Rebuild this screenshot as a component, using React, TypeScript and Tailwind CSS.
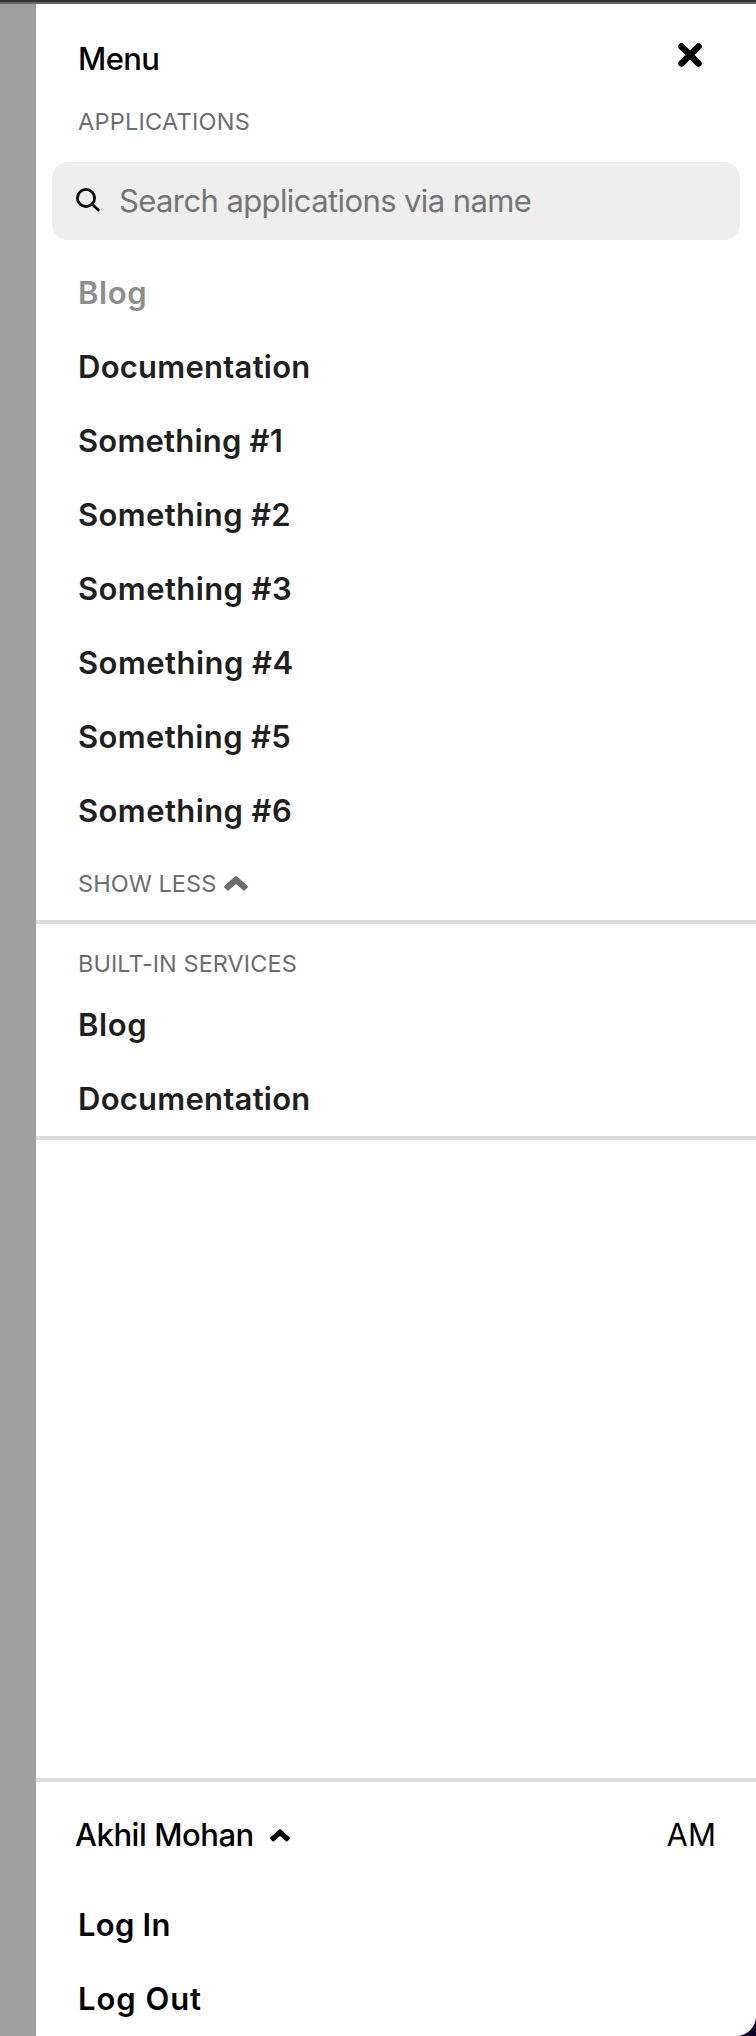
type Item = { label: string; tracking: string; muted?: boolean };

const applications: Item[] = [
  { label: "Blog", tracking: "tracking-[0.6px]", muted: true },
  { label: "Documentation", tracking: "tracking-[0.25px]" },
  { label: "Something #1", tracking: "tracking-[0.2px]" },
  { label: "Something #2", tracking: "tracking-[0.35px]" },
  { label: "Something #3", tracking: "tracking-[0.4px]" },
  { label: "Something #4", tracking: "tracking-[0.45px]" },
  { label: "Something #5", tracking: "tracking-[0.35px]" },
  { label: "Something #6", tracking: "tracking-[0.4px]" },
];

const services: Item[] = [
  { label: "Blog", tracking: "tracking-[0.6px]" },
  { label: "Documentation", tracking: "tracking-[0.25px]" },
];

const account: Item[] = [
  { label: "Log In", tracking: "tracking-[0.25px]" },
  { label: "Log Out", tracking: "tracking-[0.95px]" },
];

function MenuItem({ item, color }: { item: Item; color: string }) {
  return (
    <li className={`flex h-[74px] items-center pl-[42px] ${item.muted ? "text-[#8e8e8e]" : color}`}>
      <a className={`text-[31px] font-semibold whitespace-nowrap ${item.tracking}`}>{item.label}</a>
    </li>
  );
}

function SearchIcon() {
  return (
    <svg className="overflow-visible" width="24" height="24" viewBox="0 0 24 24" fill="none" stroke="#000" strokeWidth="2.8" strokeLinecap="round">
      <circle cx="10" cy="9" r="8.6" />
      <path d="M16.2 15.2 L22.3 21" />
    </svg>
  );
}

function CloseIcon() {
  return (
    <svg width="24" height="24" viewBox="0 0 24 24" fill="none" stroke="currentColor" strokeWidth="6.6" strokeLinecap="round">
      <path d="M3.5 3.5 L20.5 20.5 M20.5 3.5 L3.5 20.5" />
    </svg>
  );
}

function ChevronUp({ width, height }: { width: number; height: number }) {
  return (
    <svg width={width} height={height} viewBox="0 0 24 16" preserveAspectRatio="none" fill="currentColor">
      <path d="M10.8 0.6 Q12 -0.4 13.2 0.6 L23.6 10.6 Q24.4 11.4 23.6 12.3 L21 15.1 Q20.1 15.9 19.2 15.1 L12 8.5 L4.8 15.1 Q3.9 15.9 3 15.1 L0.4 12.3 Q-0.4 11.4 0.4 10.6 Z" />
    </svg>
  );
}

export default function App() {
  return (
    <div className="relative flex h-[2036px] w-[756px] flex-col overflow-hidden bg-[#9f9f9f] font-['Inter',sans-serif]">
      <div className="h-[4px] shrink-0 border-b-2 border-[#666666] bg-[#333333]" />
      <div className="flex grow bg-[#9f9f9f] pl-[36px]">
        <aside className="flex grow flex-col bg-white">
          <header className="flex h-[92px] items-start justify-between pt-[18px] pr-[54px] pl-[42px]">
            <h1 className="text-[31px] leading-[74px] font-medium tracking-[-0.65px] text-black">Menu</h1>
            <button className="mt-[21px] text-black">
              <CloseIcon />
            </button>
          </header>
          <div className="flex h-[66px] items-start pl-[42px]">
            <h2 className="text-[23.5px] leading-[52px] tracking-[0.25px] text-[#6a6e73]">APPLICATIONS</h2>
          </div>
          <div className="mr-[16px] ml-[16px] flex h-[78px] items-center gap-[19px] rounded-2xl bg-[#eeeeee] pl-[24px]">
            <SearchIcon />
            <span className="text-[31px] tracking-[-0.6px] whitespace-nowrap text-[#757575]">Search applications via name</span>
          </div>
          <ul className="mt-[16px]">
            {applications.map((item) => (
              <MenuItem key={item.label} item={item} color="text-[#1f1f1f]" />
            ))}
          </ul>
          <div className="flex h-[76px] items-center gap-[8px] border-b-4 border-[#dddddd] pl-[42px] text-[#6a6e73]">
            <span className="text-[23.5px] tracking-[0.05px]">SHOW LESS</span>
            <span className="pb-px">
              <ChevronUp width={24} height={15} />
            </span>
          </div>
          <section className="border-b-4 border-[#dddddd]">
            <h2 className="h-[64px] pt-[15px] pl-[42px] text-[23.5px] leading-[50px] tracking-[0.05px] text-[#6a6e73]">
              BUILT-IN SERVICES
            </h2>
            <ul>
              {services.map((item) => (
                <MenuItem key={item.label} item={item} color="text-[#1f1f1f]" />
              ))}
            </ul>
          </section>
          <footer className="mt-auto border-t-4 border-[#dddddd]">
            <div className="flex h-[106px] items-center justify-between pr-[40px] pl-[39px] text-black">
              <div className="flex items-center gap-[16px]">
                <span className="text-[31px] font-medium tracking-[-0.45px]">Akhil Mohan</span>
                <span className="pt-px">
                  <ChevronUp width={20} height={13} />
                </span>
              </div>
              <span className="text-[31px]">AM</span>
            </div>
            <ul>
              {account.map((item) => (
                <MenuItem key={item.label} item={item} color="text-black" />
              ))}
            </ul>
          </footer>
        </aside>
      </div>
      <svg className="absolute right-0 bottom-0" width="20" height="20" viewBox="0 0 20 20">
        <path d="M20 0 A20 20 0 0 1 0 20 H20 Z" fill="#0e0427" />
      </svg>
    </div>
  );
}
